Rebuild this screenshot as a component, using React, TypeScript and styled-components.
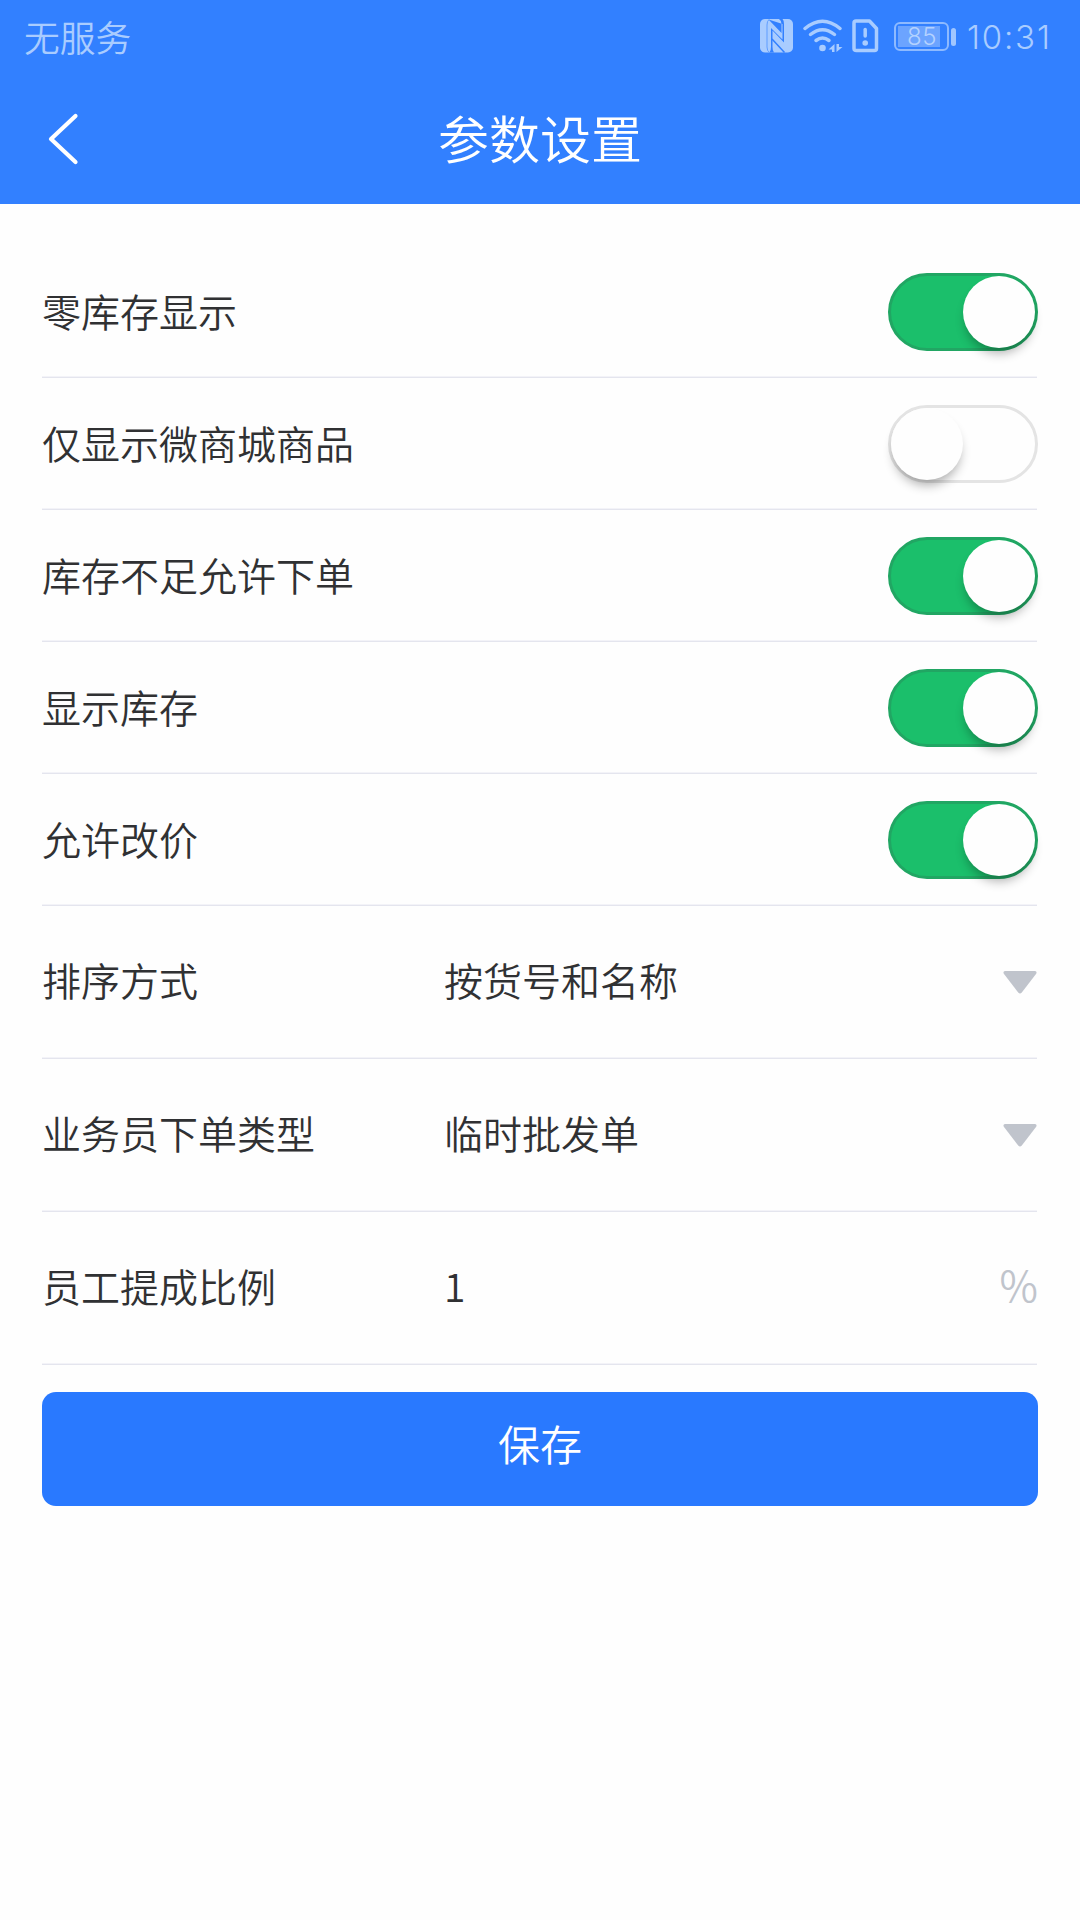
import React, { useState } from 'react';
import styled, { createGlobalStyle } from 'styled-components';

const GlobalStyle = createGlobalStyle`
  * { box-sizing: border-box; }
  body {
    margin: 0;
    background: #fff;
    font-family: "Noto Sans CJK SC", "Noto Sans", sans-serif;
    font-weight: 350;
    color: #303133;
  }
  button, input { font: inherit; color: inherit; border: 0; padding: 0; background: none; outline: none; }
`;

const Screen = styled.div`
  width: 1080px;
  min-height: 1920px;
  background: #fefefe;
`;

const TopArea = styled.header`
  height: 204px;
  background: #3280ff;
  color: #fff;
`;

const StatusBar = styled.div`
  height: 74px;
  padding: 0 29px 0 24px;
  display: flex;
  align-items: center;
  justify-content: space-between;
  color: #a9ccff;
`;

const Carrier = styled.span`
  font-size: 35.8px;
  line-height: 72px;
  height: 74px;
`;

const StatusIcons = styled.div`
  display: flex;
  align-items: center;
  height: 74px;
`;

const Glyph = styled.svg<{ $gap: number }>`
  display: block;
  flex: none;
  margin: 0 ${(p) => p.$gap}px 2px 0;
`;

const Battery = styled.div`
  width: 55px;
  height: 29px;
  border: 2px solid #8ebaff;
  border-radius: 6px;
  padding: 2px;
  margin-bottom: 1px;
  flex: none;
`;

const BatteryFill = styled.div`
  width: 42px;
  height: 21px;
  background: #6ca4ff;
  padding-left: 9px;
  color: #b4d2ff;
  font: 350 24px/21px Inter, sans-serif;
  letter-spacing: 0.6px;
  white-space: nowrap;
`;

const BatteryTip = styled.div`
  width: 5px;
  height: 18px;
  border-radius: 2.5px;
  background: #a0c6ff;
  margin: 0 11px 0 2px;
`;

const Clock = styled.span`
  width: 84px;
  font: 300 33px/74px Inter, sans-serif;
  letter-spacing: 1.8px;
  white-space: nowrap;
`;

const NavBar = styled.div`
  height: 130px;
  display: grid;
  grid-template-columns: 120px 1fr 120px;
  align-items: center;
`;

const BackButton = styled.button`
  height: 130px;
  padding: 0 0 0 45px;
  display: flex;
  align-items: center;
`;

const Title = styled.h1`
  margin: 0;
  height: 130px;
  text-align: center;
  font-size: 51px;
  font-weight: 350;
  line-height: 126px;
`;

const Settings = styled.main`
  padding: 42px 43px 0 42px;
`;

const Row = styled.div<{ $height: number; $lift: number }>`
  height: ${(p) => p.$height}px;
  display: flex;
  align-items: center;
  box-shadow: inset 0 -1px #e4e5ee, inset 0 -2px #f3f3f8;
  font-size: 39px;

  > span, > input {
    height: 60px;
    line-height: 60px;
    margin-bottom: ${(p) => p.$lift}px;
  }
`;

const Label = styled.span<{ $width?: number }>`
  width: ${(p) => (p.$width ? p.$width + 'px' : 'auto')};
  flex: ${(p) => (p.$width ? 'none' : '1')};
  white-space: nowrap;
`;

const Value = styled.span`
  flex: 1;
`;

const NumberInput = styled.input`
  flex: 1;
  min-width: 0;
`;

const Unit = styled.span`
  color: #c0c4cc;
  font-size: 42px;
  && {
    line-height: 58px;
    margin-right: -1px;
  }
`;

const Switch = styled.button<{ $on: boolean }>`
  width: 150px;
  height: 78px;
  margin-right: -1px;
  flex: none;
  display: flex;
  justify-content: ${(p) => (p.$on ? 'flex-end' : 'flex-start')};
  border: 3px solid ${(p) => (p.$on ? '#21a663' : '#e4e4e4')};
  border-radius: 39px;
  background: ${(p) => (p.$on ? '#1bbf6b' : '#fefefe')};
`;

const Knob = styled.span`
  width: 72px;
  height: 72px;
  border-radius: 50%;
  background: #fefefe;
  box-shadow: 0 8px 11px -3px rgba(0, 0, 0, 0.32);
`;

const SaveButton = styled.button`
  display: block;
  width: 996px;
  height: 114px;
  margin-top: 27px;
  padding-bottom: 14px;
  border-radius: 14px;
  background: #2979ff;
  color: #fff;
  font-size: 42px;
`;

const toggleLabels = ['零库存显示', '仅显示微商城商品', '库存不足允许下单', '显示库存', '允许改价'];

const NfcIcon = () => (
  <Glyph $gap={10} width="33" height="34" viewBox="0 0 33 34">
    <rect width="33" height="33.500" rx="5" fill="currentColor" />
    <path d="M9 0.500Q7 2 7 6V28Q7 32 9.500 33.500" fill="none" stroke="#5f9dff" strokeWidth="1" />
    <path d="M8.500 0.500L21.500 14V5Q21.500 1.500 19 0H22.500Q24 1.500 24 5V23.500L12.500 11.500V28Q12.500 32 14 33.500H9.500Q11 32 11 28V9L22.500 20.500V5Z" fill="#3280ff" stroke="none" />
    <path d="M12 20L24.500 33.500" stroke="#3280ff" strokeWidth="1.500" />
  </Glyph>
);

const WifiIcon = () => (
  <Glyph $gap={9} width="40" height="34" viewBox="0 0 40 34" fill="none" stroke="currentColor" strokeWidth="3.500" strokeLinecap="round">
    <path d="M2 9.500Q19.500 -5 37 9.500" />
    <path d="M7.500 15.500Q19.500 6 31.500 15.500" />
    <path d="M13 21.500Q19.500 16.500 26 21.500" />
    <circle cx="19.500" cy="29" r="3.300" fill="currentColor" stroke="none" />
    <path d="M31.500 25V33H29V30.500H25.500ZM33.500 25V33L39.500 28H36V25Z" fill="currentColor" stroke="none" />
  </Glyph>
);

const SimIcon = () => (
  <Glyph $gap={15} width="27" height="34" viewBox="0 0 27 34" fill="none" stroke="currentColor" strokeWidth="3.500">
    <path d="M4 2H17.500L24.500 9.500V29.500Q24.500 31.500 22.500 31.500H4.500Q2 31.500 2 29.500V4Q2 2 4 2Z" strokeLinejoin="round" />
    <path d="M13.200 10.500V17" strokeLinecap="round" />
    <circle cx="13.200" cy="24" r="2.800" fill="currentColor" stroke="none" />
  </Glyph>
);

const DropIcon = () => (
  <svg width="34" height="23" viewBox="0 0 34 23">
    <path d="M2 0H32Q34.500 0.500 33 3L18.800 21.500Q17 23.600 15.200 21.500L1 3Q-0.500 0.500 2 0Z" fill="#c0c4cc" />
  </svg>
);

export default function App() {
  const [on, setOn] = useState([true, false, true, true, true]);
  const [rate, setRate] = useState('1');
  const flip = (index: number) => setOn((all) => all.map((v, i) => (i === index ? !v : v)));

  return (
    <Screen>
      <GlobalStyle />
      <TopArea>
        <StatusBar>
          <Carrier>无服务</Carrier>
          <StatusIcons>
            <NfcIcon />
            <WifiIcon />
            <SimIcon />
            <Battery>
              <BatteryFill>85</BatteryFill>
            </Battery>
            <BatteryTip />
            <Clock>10:31</Clock>
          </StatusIcons>
        </StatusBar>
        <NavBar>
          <BackButton aria-label="返回">
            <svg width="36" height="54" viewBox="0 0 36 54" fill="none" stroke="#fff" strokeWidth="4.200" strokeLinecap="round" strokeLinejoin="round">
              <path d="M30.500 4L6 27L30.500 50" />
            </svg>
          </BackButton>
          <Title>参数设置</Title>
        </NavBar>
      </TopArea>
      <Settings>
        {toggleLabels.map((text, i) => (
          <Row key={text} $height={132} $lift={4}>
            <Label>{text}</Label>
            <Switch $on={on[i]} role="switch" aria-checked={on[i]} onClick={() => flip(i)}>
              <Knob />
            </Switch>
          </Row>
        ))}
        <Row $height={153} $lift={7}>
          <Label $width={402}>排序方式</Label>
          <Value>按货号和名称</Value>
          <DropIcon />
        </Row>
        <Row $height={153} $lift={7}>
          <Label $width={402}>业务员下单类型</Label>
          <Value>临时批发单</Value>
          <DropIcon />
        </Row>
        <Row $height={153} $lift={7}>
          <Label $width={402}>员工提成比例</Label>
          <NumberInput value={rate} onChange={(e) => setRate(e.target.value)} />
          <Unit>%</Unit>
        </Row>
        <SaveButton>保存</SaveButton>
      </Settings>
    </Screen>
  );
}
